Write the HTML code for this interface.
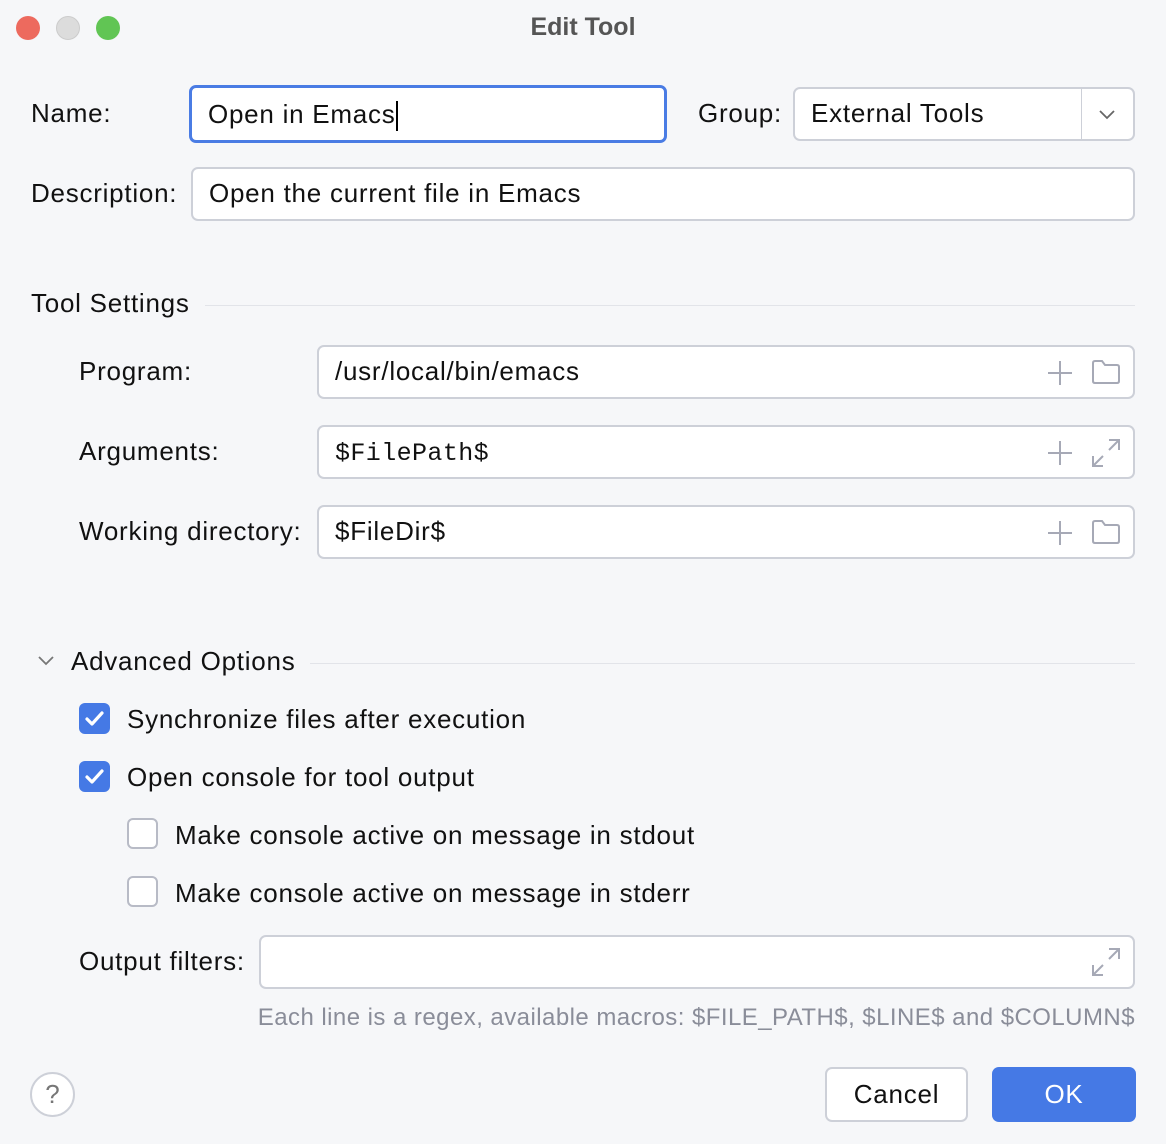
<!DOCTYPE html>
<html><head><meta charset="utf-8"><style>
*{box-sizing:border-box;margin:0;padding:0}
body{width:1166px;height:1144px;background:#f6f7f9;font-family:"Liberation Sans",sans-serif;color:#111;font-size:26px;letter-spacing:0.75px;position:relative;overflow:hidden}
.a{position:absolute;white-space:nowrap}
.lbl{position:absolute;height:40px;line-height:40px;white-space:nowrap}
.f{position:absolute;background:#fff;border:2px solid #cdd0d8;border-radius:7px;padding-left:16px;line-height:49px;white-space:nowrap}
.line{position:absolute;height:1px;background:#e2e4e9}
.cb{position:absolute;width:31px;height:31px;border-radius:6px}
.on{background:#4579e5}
.off{background:#fff;border:2px solid #b8bbc6}
svg{position:absolute}
</style></head><body>
<div class="a" style="left:16px;top:16px;width:24px;height:24px;border-radius:50%;background:#ed6a5e"></div>
<div class="a" style="left:56px;top:16px;width:24px;height:24px;border-radius:50%;background:#dcdcdc;border:1px solid #ccc"></div>
<div class="a" style="left:96px;top:16px;width:24px;height:24px;border-radius:50%;background:#61c554"></div>
<div class="a" style="left:0;width:1166px;top:10px;text-align:center;font-weight:bold;color:#555;font-size:25px;line-height:34px;letter-spacing:0">Edit Tool</div>

<div class="lbl" style="left:31px;top:93px">Name:</div>
<div class="f" style="left:189px;top:85px;width:478px;height:58px;border:3px solid #4a7ce4;padding-left:16px;line-height:52px">Open in Emacs<span style="display:inline-block;width:2px;height:30px;background:#000;vertical-align:middle"></span></div>
<div class="lbl" style="left:698px;top:93px">Group:</div>
<div class="f" style="left:793px;top:87px;width:342px;height:54px">External Tools</div>
<div class="a" style="left:1081px;top:88px;width:1px;height:52px;background:#cdd0d8"></div>
<svg style="left:1098px;top:108px" width="18" height="12"><path d="M2 3 L9 10 L16 3" stroke="#666" stroke-width="1.8" fill="none"/></svg>

<div class="lbl" style="left:31px;top:173px">Description:</div>
<div class="f" style="left:191px;top:167px;width:944px;height:54px">Open the current file in Emacs</div>

<div class="lbl" style="left:31px;top:283px">Tool Settings</div>
<div class="line" style="left:205px;top:305px;width:930px"></div>

<div class="lbl" style="left:79px;top:351px">Program:</div>
<div class="f" style="left:317px;top:345px;width:818px;height:54px">/usr/local/bin/emacs</div>
<div class="lbl" style="left:79px;top:431px">Arguments:</div>
<div class="f" style="left:317px;top:425px;width:818px;height:54px;font-family:'Liberation Mono',monospace;font-size:25px;letter-spacing:0.4px;line-height:53px">$FilePath$</div>
<div class="lbl" style="left:79px;top:511px">Working directory:</div>
<div class="f" style="left:317px;top:505px;width:818px;height:54px">$FileDir$</div>

<svg style="left:1046px;top:359px" width="28" height="28"><path d="M14 2V26M2 14H26" stroke="#a6a9b6" stroke-width="2"/></svg>
<svg style="left:1091px;top:359px" width="30" height="26"><path d="M2 4 Q2 2 4 2 H11 L14 6 H26 Q28 6 28 8 V22 Q28 24 26 24 H4 Q2 24 2 22 Z" stroke="#a6a9b6" stroke-width="2" fill="none"/></svg>
<svg style="left:1046px;top:439px" width="28" height="28"><path d="M14 2V26M2 14H26" stroke="#a6a9b6" stroke-width="2"/></svg>
<svg style="left:1090px;top:437px" width="32" height="32"><path d="M19 3H29V13M29 3L19 13M3 19V29H13M3 29L13 19" stroke="#a6a9b6" stroke-width="2" fill="none"/></svg>
<svg style="left:1046px;top:519px" width="28" height="28"><path d="M14 2V26M2 14H26" stroke="#a6a9b6" stroke-width="2"/></svg>
<svg style="left:1091px;top:519px" width="30" height="26"><path d="M2 4 Q2 2 4 2 H11 L14 6 H26 Q28 6 28 8 V22 Q28 24 26 24 H4 Q2 24 2 22 Z" stroke="#a6a9b6" stroke-width="2" fill="none"/></svg>

<svg style="left:37px;top:655px" width="18" height="12"><path d="M2 2 L9 9 L16 2" stroke="#777" stroke-width="1.8" fill="none"/></svg>
<div class="lbl" style="left:71px;top:641px">Advanced Options</div>
<div class="line" style="left:310px;top:663px;width:825px"></div>

<div class="cb on" style="left:79px;top:703px"></div>
<svg style="left:79px;top:703px" width="31" height="31"><path d="M8 16 L13 21 L23 10" stroke="#fff" stroke-width="3.2" fill="none" stroke-linecap="round" stroke-linejoin="round"/></svg>
<div class="lbl" style="left:127px;top:699px">Synchronize files after execution</div>
<div class="cb on" style="left:79px;top:761px"></div>
<svg style="left:79px;top:761px" width="31" height="31"><path d="M8 16 L13 21 L23 10" stroke="#fff" stroke-width="3.2" fill="none" stroke-linecap="round" stroke-linejoin="round"/></svg>
<div class="lbl" style="left:127px;top:757px">Open console for tool output</div>
<div class="cb off" style="left:127px;top:818px"></div>
<div class="lbl" style="left:175px;top:815px">Make console active on message in stdout</div>
<div class="cb off" style="left:127px;top:876px"></div>
<div class="lbl" style="left:175px;top:873px">Make console active on message in stderr</div>

<div class="lbl" style="left:79px;top:941px">Output filters:</div>
<div class="f" style="left:259px;top:935px;width:876px;height:54px"></div>
<svg style="left:1090px;top:946px" width="32" height="32"><path d="M19 3H29V13M29 3L19 13M3 19V29H13M3 29L13 19" stroke="#a6a9b6" stroke-width="2" fill="none"/></svg>
<div class="lbl" style="right:31px;top:998px;color:#8a8d99;font-size:24px;letter-spacing:0.45px">Each line is a regex, available macros: $FILE_PATH$, $LINE$ and $COLUMN$</div>

<div class="a" style="left:30px;top:1072px;width:45px;height:45px;border-radius:50%;background:#fff;border:2px solid #cdd0d8;text-align:center;line-height:41px;color:#777;font-size:26px;letter-spacing:0">?</div>
<div class="a" style="left:825px;top:1067px;width:143px;height:55px;border-radius:7px;background:#fff;border:2px solid #cdd0d8;text-align:center;line-height:51px">Cancel</div>
<div class="a" style="left:992px;top:1067px;width:144px;height:55px;border-radius:7px;background:#4579e5;color:#fff;text-align:center;line-height:55px">OK</div>
</body></html>
